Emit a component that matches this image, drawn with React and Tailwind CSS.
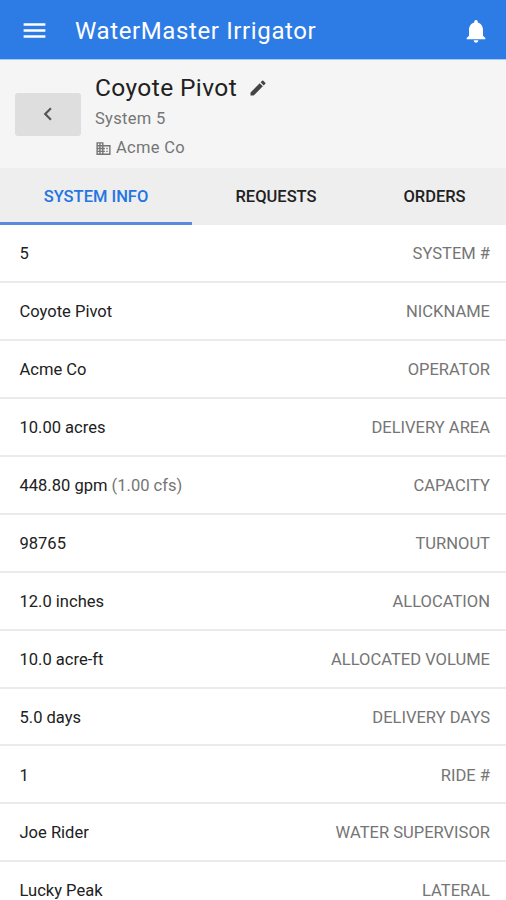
import { MdMenu, MdNotifications, MdEdit, MdBusiness, MdChevronLeft } from "react-icons/md";

const rows = [
  ["5", "SYSTEM #"],
  ["Coyote Pivot", "NICKNAME"],
  ["Acme Co", "OPERATOR"],
  ["10.00 acres", "DELIVERY AREA"],
  ["448.80 gpm", "CAPACITY", "(1.00 cfs)"],
  ["98765", "TURNOUT"],
  ["12.0 inches", "ALLOCATION"],
  ["10.0 acre-ft", "ALLOCATED VOLUME"],
  ["5.0 days", "DELIVERY DAYS"],
  ["1", "RIDE #"],
  ["Joe Rider", "WATER SUPERVISOR"],
  ["Lucky Peak", "LATERAL"],
];

export default function App() {
  return (
    <div className="flex h-[900px] w-[506px] flex-col overflow-hidden bg-white font-[Roboto,sans-serif] text-[#212121]">
      <header className="flex h-[60px] shrink-0 items-center border-b border-[#a9c8f5] bg-[#2d7be5] pt-[2px] pr-[16px] pl-[20px] text-white">
        <MdMenu className="size-[29px]" />
        <h1 className="ml-[26px] flex-1 text-[24px] tracking-[0.62px]">WaterMaster Irrigator</h1>
        <MdNotifications className="size-[28px]" />
      </header>
      <section className="flex h-[108px] shrink-0 bg-[#f5f5f5] pl-[15px]">
        <button className="mt-[33px] flex h-[43px] w-[66px] items-center justify-center rounded-[3px] bg-[#dedede] pb-[2px]">
          <MdChevronLeft className="size-[26px] text-[#555]" />
        </button>
        <div className="ml-[14px] flex flex-col pt-[11px]">
          <div className="flex h-[34px] items-center text-[24.5px] tracking-[0.4px]">
            Coyote Pivot
            <MdEdit className="ml-[11px] size-[20px] text-[#444]" />
          </div>
          <div className="flex h-[28px] items-center text-[16.5px] tracking-[0.3px] text-[#757575]">System 5</div>
          <div className="flex h-[29px] items-center pt-[1px] text-[16.5px] tracking-[0.3px] text-[#757575]">
            <MdBusiness className="mr-[4px] size-[17px]" />
            Acme Co
          </div>
        </div>
      </section>
      <nav className="flex h-[57px] shrink-0 bg-[#eeeeee] text-[16.5px] font-medium">
        <div className="flex w-[192px] items-center justify-center border-b-[3px] border-[#5a8ae0] pt-[5px] text-[#2475e3]">SYSTEM INFO</div>
        <div className="flex w-[168px] items-center justify-center pt-[2px]">REQUESTS</div>
        <div className="flex flex-1 items-center justify-center pt-[2px] pl-[3px]">ORDERS</div>
      </nav>
      <main>
        {rows.map(([value, label, extra]) => (
          <div key={label} className="flex h-[57.95px] items-center justify-between border-b-2 border-[#ebebeb] pt-[3px] pr-[16px] pl-[19.5px] text-[16.55px]">
            <span>{value}{extra && <span className="text-[#757575]"> {extra}</span>}</span>
            <span className="text-[#757575]">{label}</span>
          </div>
        ))}
      </main>
    </div>
  );
}
